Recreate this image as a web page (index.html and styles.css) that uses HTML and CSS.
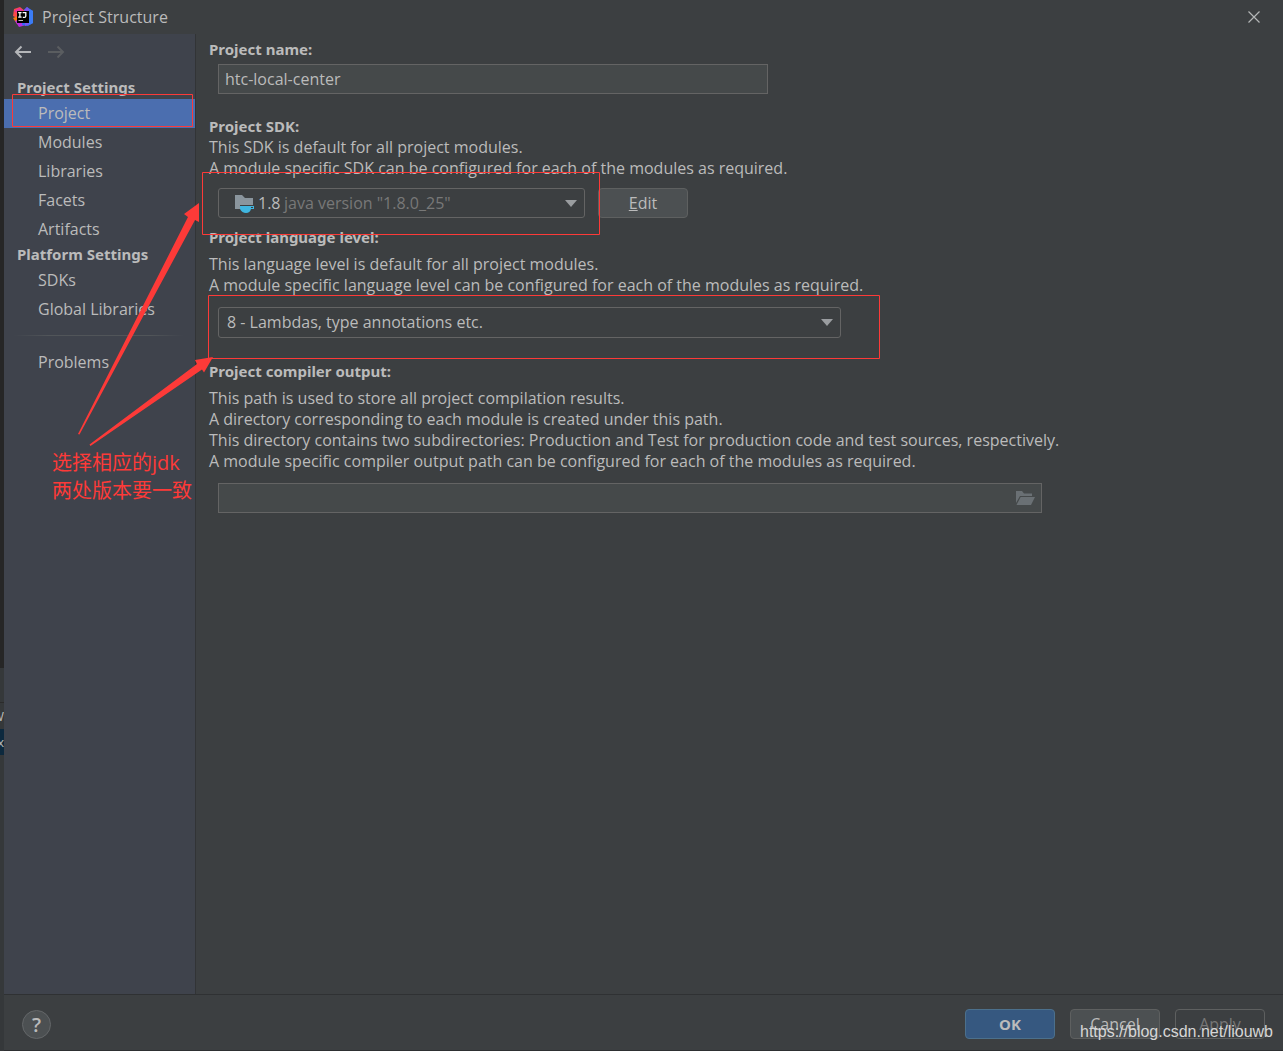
FILE: index.html
```html
<!DOCTYPE html>
<html lang="en">
<head>
<meta charset="utf-8">
<title>Project Structure</title>
<link rel="stylesheet" href="styles.css">
</head>
<body>
<div class="screen">
  <div class="backdrop" aria-hidden="true">
    <div class="backdrop-editor"></div>
    <div class="backdrop-tabs"></div>
    <div class="backdrop-row">W</div>
    <div class="backdrop-row backdrop-selected">x</div>
  </div>
  <div class="dialog">
    <header class="titlebar">
      <svg class="logo" width="20" height="20" viewBox="0 0 20 20" aria-hidden="true">
        <path fill="#fc4a4a" d="M1 2 7 0l5 4-6 8-6-3z"/>
        <path fill="#f97a12" d="M0 11l5-2 2 7-3 1z"/>
        <path fill="#b52de0" d="M2 14l8-3 3 7-7 2z"/>
        <path fill="#e8309a" d="M1 4l5-3 4 2-3 5z"/>
        <path fill="#2f6df6" d="M11 3l3-3 6 4v12l-5 3-6-1z"/>
        <path fill="#7b52f0" d="M11 3l3-3 3 3v14l-5 2z"/>
        <path fill="#3b7cf5" d="M16 2l4 2v12l-4 2z"/>
        <rect x="4" y="4" width="12" height="12" fill="#000"/>
        <path stroke="#fff" stroke-width="1.3" fill="none" d="M5.2 5.6h3.4M6.9 5.6v4.6M5.2 10.2h3.4M9.6 5.6h3.2v3.3q0 1.5-1.5 1.5H9.8"/>
        <path stroke="#bbb" d="M5.5 13.5H10"/>
      </svg>
      <h1 class="title">Project Structure</h1>
      <button class="icon-button" type="button" aria-label="Close">
        <svg width="14" height="14" viewBox="0 0 14 14"><path d="M1.500 1.500 12.500 12.500M12.500 1.500 1.500 12.500" stroke="#b4b6b7" stroke-width="1.200"/></svg>
      </button>
    </header>
    <div class="body">
      <nav class="sidebar">
        <div class="history">
          <button class="icon-button" type="button" aria-label="Back">
            <svg width="18" height="14" viewBox="0 0 18 14"><path d="M7.500 1.500 2 7l5.500 5.500M2 7h15" fill="none" stroke="#b4b6b9" stroke-width="2"/></svg>
          </button>
          <button class="icon-button" type="button" aria-label="Forward" disabled>
            <svg width="18" height="14" viewBox="0 0 18 14"><path d="M10.500 1.500 16 7l-5.500 5.500M16 7H1" fill="none" stroke="#5a5d60" stroke-width="2"/></svg>
          </button>
        </div>
        <h2 class="group">Project Settings</h2>
        <a class="item selected" href="#project">Project</a>
        <a class="item" href="#modules">Modules</a>
        <a class="item" href="#libraries">Libraries</a>
        <a class="item" href="#facets">Facets</a>
        <a class="item" href="#artifacts">Artifacts</a>
        <h2 class="group">Platform Settings</h2>
        <a class="item" href="#sdks">SDKs</a>
        <a class="item" href="#global-libraries">Global Libraries</a>
        <hr class="separator">
        <a class="item" href="#problems">Problems</a>
      </nav>
      <main class="content">
        <section class="section">
          <label class="label" for="name">Project name:</label>
          <input class="field name-field" id="name" type="text" value="htc-local-center">
        </section>
        <section class="section">
          <label class="label" for="sdk">Project SDK:</label>
          <p class="hint">This SDK is default for all project modules.<br>A module specific SDK can be configured for each of the modules as required.</p>
          <div class="sdk-row">
            <div class="combo sdk-combo">
              <select class="select" id="sdk"><option>1.8</option></select>
              <span class="sdk-detail">
                <svg width="20" height="20" viewBox="0 0 20 20" aria-hidden="true">
                  <path fill="#8a959d" d="M0 2h7l3 3h8v7H5v4H0z"/>
                  <path fill="#40b6e0" d="M5 13h14v3h-3q-1 4-5 4t-6-4z"/>
                  <path fill="#3c3f41" d="M16 14h2v1h-2z"/>
                </svg>
                <span class="sdk-version">java version "1.8.0_25"</span>
              </span>
              <svg class="arrow" width="12" height="7" viewBox="0 0 12 7" aria-hidden="true"><path d="M0 0h12L6 7z" fill="#9a9da0"/></svg>
            </div>
            <button class="button" type="button"><span><u>E</u>dit</span></button>
          </div>
        </section>
        <section class="section">
          <label class="label" for="level">Project language level:</label>
          <p class="hint spaced">This language level is default for all project modules.<br>A module specific language level can be configured for each of the modules as required.</p>
          <div class="combo level-combo">
            <select class="select" id="level"><option>8 - Lambdas, type annotations etc.</option></select>
            <svg class="arrow" width="12" height="7" viewBox="0 0 12 7" aria-hidden="true"><path d="M0 0h12L6 7z" fill="#9a9da0"/></svg>
          </div>
        </section>
        <section class="section">
          <label class="label" for="output">Project compiler output:</label>
          <p class="hint spaced">This path is used to store all project compilation results.<br>A directory corresponding to each module is created under this path.<br>This directory contains two subdirectories: Production and Test for production code and test sources, respectively.<br>A module specific compiler output path can be configured for each of the modules as required.</p>
          <div class="field output-field">
            <input class="bare-input" id="output" type="text">
            <button class="icon-button" type="button" aria-label="Browse">
              <svg width="19" height="14" viewBox="0 0 19 14"><path fill="#6a7074" d="M0 0h6l2 2.500h8V5H4L0 12z"/><path fill="#6a7074" d="M4.600 6H19l-4 8H.5z"/></svg>
            </button>
          </div>
        </section>
      </main>
    </div>
    <footer class="footer">
      <button class="help" type="button" aria-label="Help">?</button>
      <div class="actions">
        <button class="button primary" type="button">OK</button>
        <button class="button" type="button">Cancel</button>
        <button class="button" type="button" disabled>Apply</button>
      </div>
    </footer>
  </div>
  <!-- Tutorial markup drawn over the dialog -->
  <svg class="markup" width="900" height="460" viewBox="0 0 900 460" aria-hidden="true">
    <g fill="none" stroke="#fd3a38">
      <path d="M12.500 94.500h180v32h-180zM202.500 172.500h397v62h-397zM208.500 295.500h671v63h-671z"/>
    </g>
    <g fill="#fd3a38">
      <path d="M78 434 188 217l-4-3 15-11v19l-4-2L79.500 434.500z"/>
      <path d="M89.500 444.500 197 364l-2-4 18-3-9 15.500-2-3L90.500 446z"/>
    </g>
  </svg>
  <p class="note" lang="zh">选择相应的jdk<br>两处版本要一致</p>
  <span class="watermark">https://blog.csdn.net/liouwb</span>
</div>
</body>
</html>
```
FILE: styles.css
```css
* { box-sizing: border-box; }

body {
  margin: 0;
  background: #3c3f41;
  color: #bbbbbb;
  font: 16px/21px "Open Sans", "Noto Sans CJK SC", sans-serif;
}

h1, h2, p { margin: 0; font-size: inherit; }

button, input, select {
  margin: 0;
  color: inherit;
  font: inherit;
}

.screen {
  position: relative;
  display: flex;
  min-height: 100vh;
  overflow: hidden;
}

/* Sliver of the window behind the dialog */
.backdrop {
  flex: none;
  width: 4px;
  overflow: hidden;
  background: #35383a;
  font-size: 13px;
}
.backdrop-editor { height: 668px; background: #262626; }
.backdrop-tabs { height: 35px; border-bottom: 1px solid #2b2b2b; }
.backdrop-row {
  display: flex;
  justify-content: flex-end;
  height: 26px;
  line-height: 26px;
}
.backdrop-selected { background: #0d293e; }

.dialog {
  display: flex;
  flex: 1;
  flex-direction: column;
  min-width: 0;
  border-bottom: 1px solid #2d2f31;
}

.titlebar {
  display: flex;
  align-items: center;
  gap: 9px;
  height: 34px;
  padding: 0 22px 0 9px;
}
.title { flex: 1; font-weight: 400; }

.icon-button {
  display: flex;
  padding: 0;
  border: 0;
  background: none;
}

.body { display: flex; flex: 1; }

.sidebar {
  display: flex;
  flex: none;
  flex-direction: column;
  width: 192px;
  border-right: 1px solid #323436;
  background: #3f434c;
}
.history {
  display: flex;
  gap: 15px;
  padding: 11px 10px 18px;
}
.group {
  padding: 0 0 2px 13px;
  font: 700 15px/20px "Noto Sans", sans-serif;
  white-space: nowrap;
}
.item {
  padding-left: 34px;
  color: inherit;
  line-height: 29px;
  text-decoration: none;
}
.selected { background: #4b6eaf; }
.separator {
  width: 170px;
  height: 1px;
  margin: 11px 10px 12px;
  border: 0;
  background: linear-gradient(90deg, transparent, #515559 20%, #515559 80%, transparent);
}

.content {
  display: flex;
  flex: 1;
  flex-direction: column;
  gap: 22px;
  min-width: 0;
  padding: 5px 13px;
}
.section { display: flex; flex-direction: column; }
.section + .section + .section { margin-top: -13px; }
.section + .section + .section + .section { margin-top: 1px; }
.label { font: 700 15px/21px "Noto Sans", sans-serif; }
.spaced { margin-top: 6px; }

.field {
  max-width: 100%;
  height: 30px;
  margin-left: 9px;
  padding: 0 6px;
  border: 1px solid #646464;
  background: #45494a;
}
.name-field { width: 550px; margin-top: 4px; }
.output-field {
  display: flex;
  align-items: center;
  width: 824px;
  margin-top: 11px;
}
.bare-input {
  flex: 1;
  min-width: 0;
  border: 0;
  background: none;
}

.sdk-row {
  display: flex;
  gap: 13px;
  margin: 9px 0 0 9px;
}
.combo {
  display: grid;
  align-items: center;
  max-width: 100%;
}
.combo > * { grid-area: 1 / 1; }
.select {
  width: 100%;
  height: 30px;
  padding: 0 30px 0 8px;
  border: 1px solid #646464;
  border-radius: 3px;
  background: #3c3f41;
  appearance: none;
}
.sdk-combo { width: 367px; }
.sdk-combo .select { padding-left: 39px; }
.level-combo { width: 623px; margin: 11px 0 0 9px; }
.level-combo .select { height: 31px; }
.sdk-detail {
  display: flex;
  align-items: center;
  gap: 29px;
  padding-left: 17px;
  color: #787878;
  pointer-events: none;
}
.arrow {
  justify-self: end;
  margin-right: 8px;
  pointer-events: none;
}

.button {
  width: 90px;
  height: 30px;
  padding: 0;
  border: 1px solid #5e6060;
  border-radius: 4px;
  background: #4c5052;
}
.button:disabled { background: none; color: #777777; }
.primary {
  border-color: #4c708c;
  background: #365880;
  font: 700 15px/21px "Noto Sans", sans-serif;
}

.footer {
  display: flex;
  align-items: center;
  justify-content: space-between;
  height: 56px;
  padding: 3px 18px 0;
  border-top: 1px solid #2f3133;
}
.actions { display: flex; gap: 15px; }
.help {
  width: 29px;
  height: 29px;
  padding: 0;
  border: 1px solid #646769;
  border-radius: 50%;
  background: #4c5052;
  font-size: 20px;
  font-weight: 600;
}

.markup {
  position: absolute;
  top: 0;
  left: 0;
  pointer-events: none;
}
.note {
  position: absolute;
  top: 449px;
  left: 52px;
  color: #fd3a38;
  font-size: 20px;
  line-height: 28px;
  white-space: nowrap;
}
.watermark {
  position: absolute;
  right: 10px;
  bottom: 9px;
  color: #d6d6d6;
  font: 16px/20px "Liberation Sans", sans-serif;
}
```
